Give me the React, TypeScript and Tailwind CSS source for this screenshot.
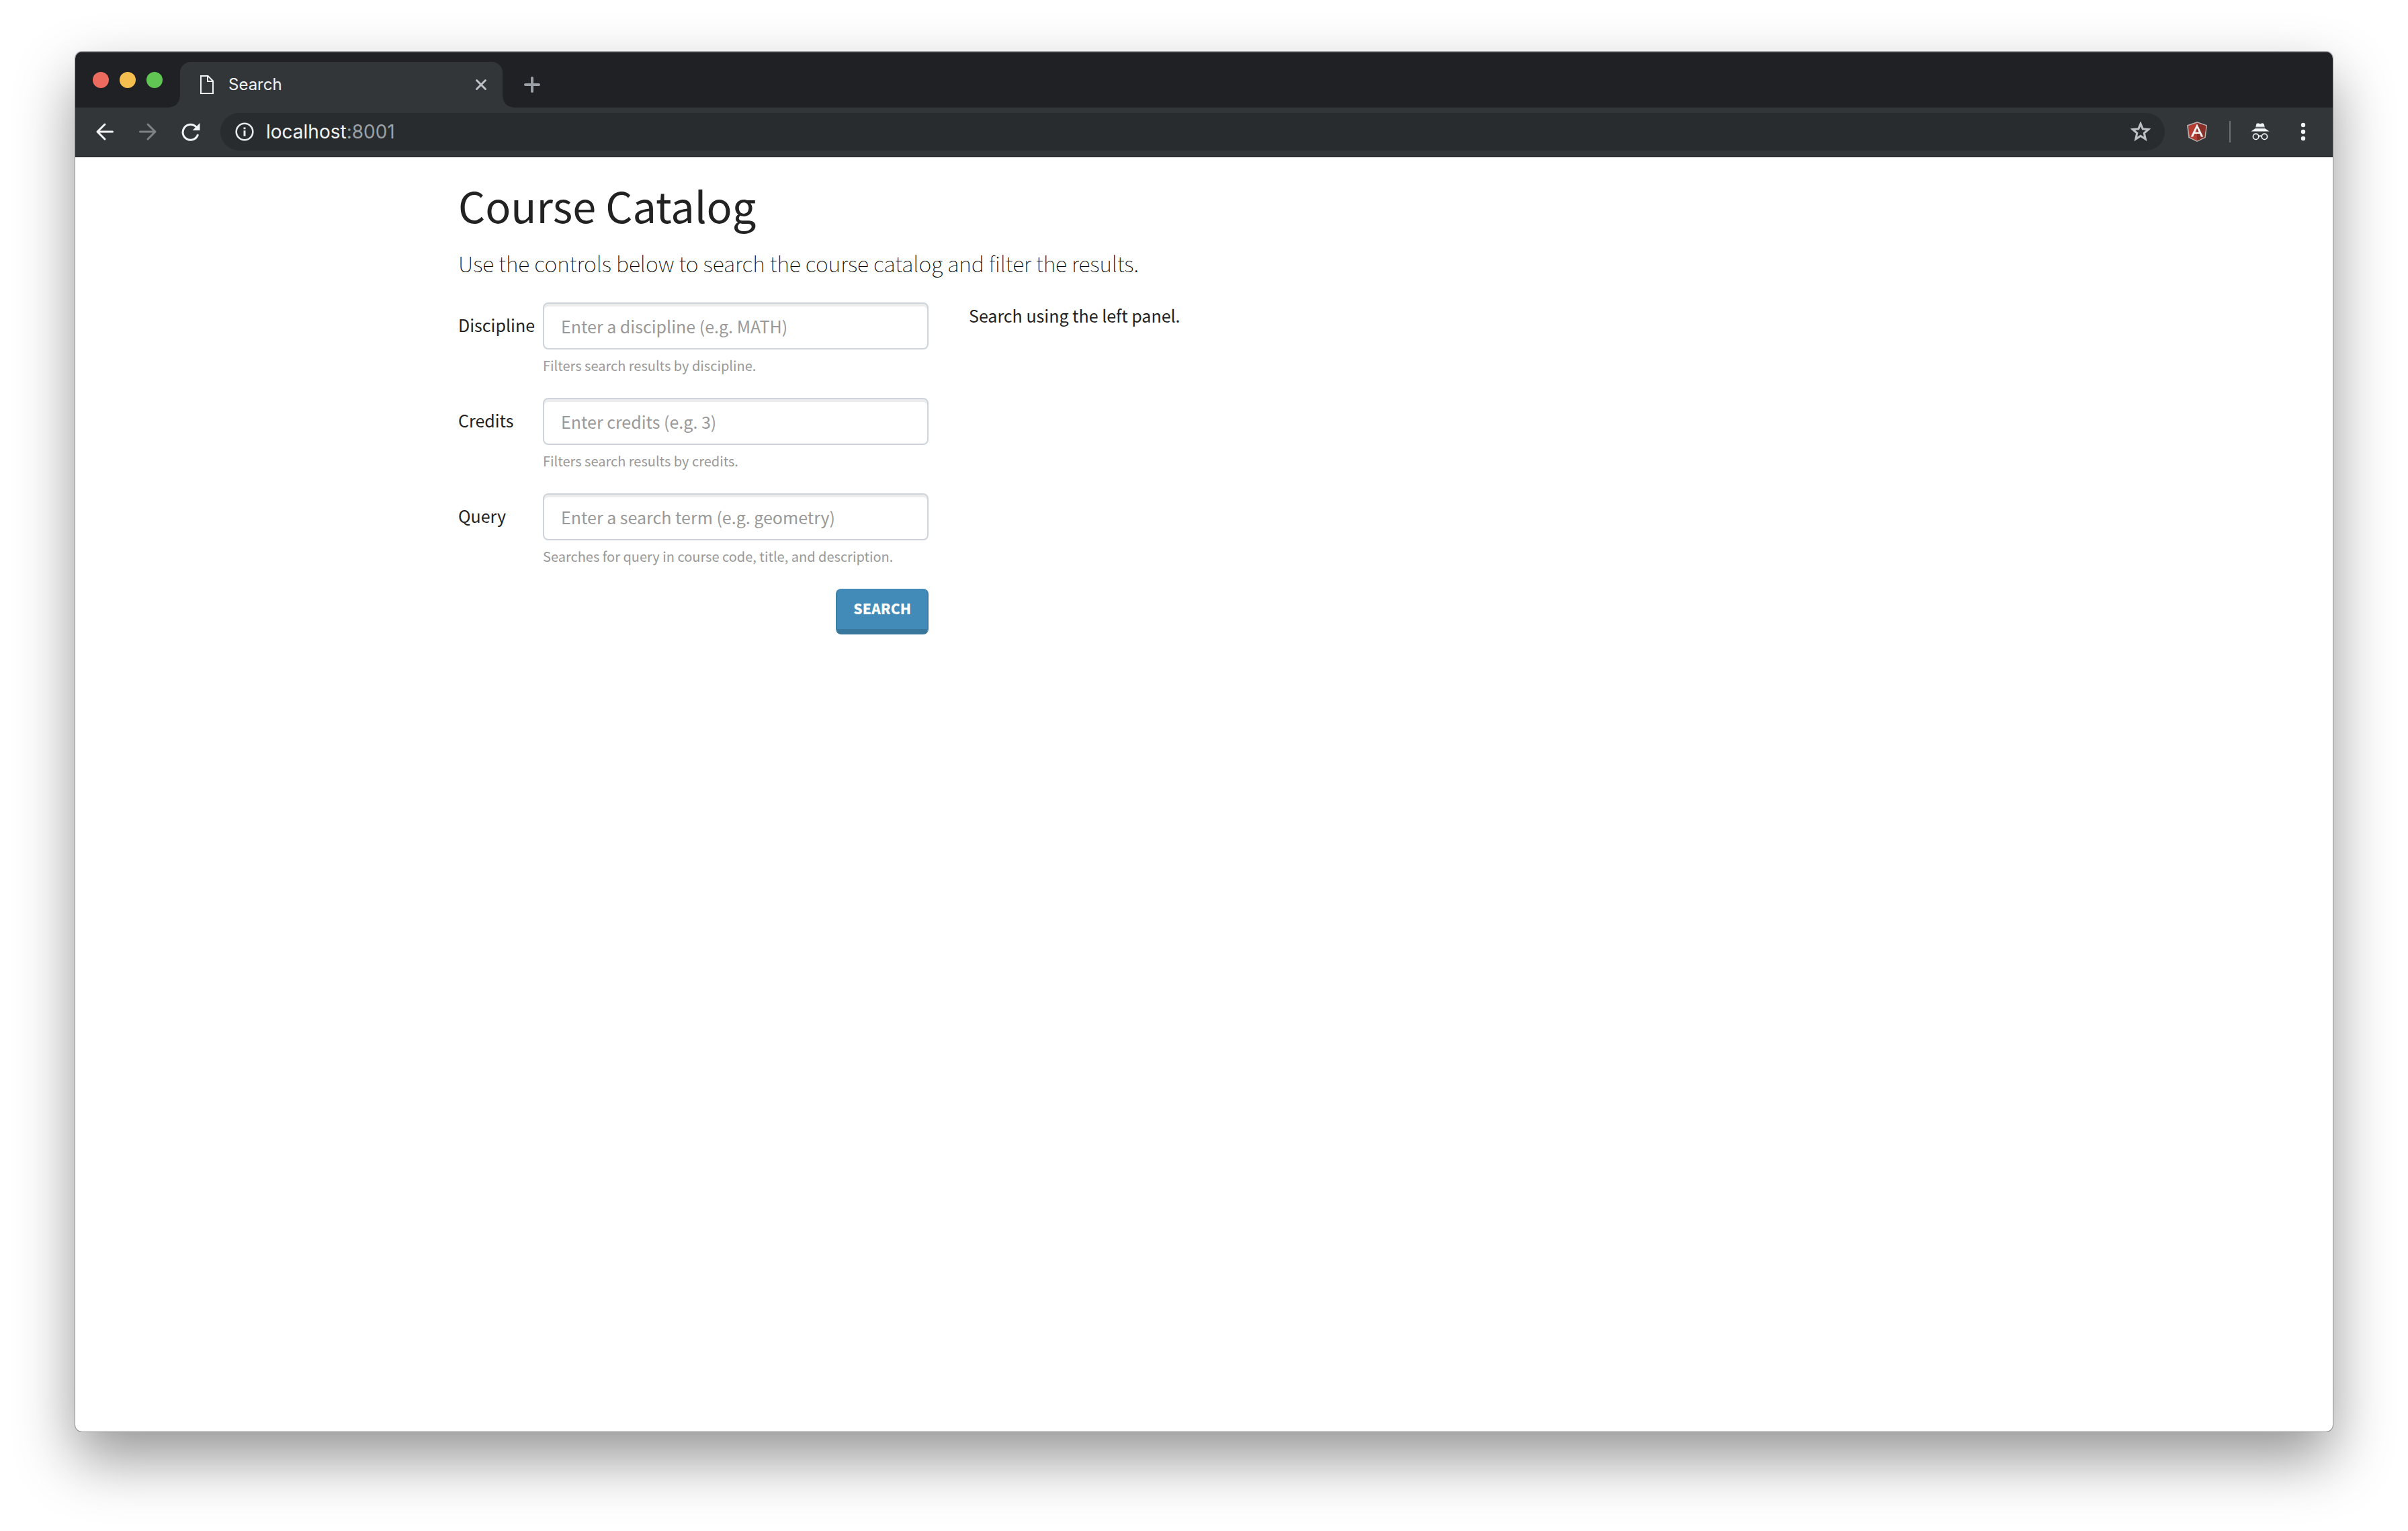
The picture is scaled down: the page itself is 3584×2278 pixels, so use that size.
import type { ReactNode } from "react";

const BODY_FONT = "font-['Noto_Sans_CJK_SC','Source_Sans_Pro',sans-serif]";
const CHROME_FONT = "font-[Inter,Roboto,sans-serif]";

function IconButton({ label, className = "", children }: { label: string; className?: string; children: ReactNode }) {
  return (
    <button type="button" aria-label={label} className={`flex h-10 w-10 shrink-0 items-center justify-center ${className}`}>
      {children}
    </button>
  );
}

function TabStrip() {
  return (
    <div className="flex h-[83px] items-end border-t border-[#5c5d5f] bg-[#202124]">
      <div className="flex h-[82px] w-[156px] shrink-0 items-center gap-4 pl-[26px]">
        <span className="h-6 w-6 rounded-full bg-[#ed6a5e]" />
        <span className="h-6 w-6 rounded-full bg-[#f5bf4f]" />
        <span className="h-6 w-6 rounded-full bg-[#61c554]" />
      </div>
      <div className="relative flex h-[68px] w-[480px] shrink-0 items-center rounded-t-2xl bg-[#323639] pl-[30px] pr-3">
        <span className="absolute bottom-0 -left-4 h-4 w-4 bg-[radial-gradient(circle_at_0_0,transparent_15px,#323639_16px)]" />
        <span className="absolute bottom-0 -right-4 h-4 w-4 bg-[radial-gradient(circle_at_100%_0,transparent_15px,#323639_16px)]" />
        <svg width="20" height="28" viewBox="0 0 20 28" fill="none" stroke="#f1f3f4" strokeWidth="2">
          <path d="M1 1H11.5L19 8.500V27H1Z" />
          <path d="M11 1V9H19" />
        </svg>
        <span className="ml-[22px] flex-1 text-2xl leading-8 text-[#f1f3f4]">Search</span>
        <IconButton label="Close tab">
          <svg width="18" height="18" viewBox="0 0 18 18" stroke="#bdc1c6" strokeWidth="3" strokeLinecap="round">
            <path d="M2.500 2.500L15.500 15.500M15.500 2.500L2.500 15.500" />
          </svg>
        </IconButton>
      </div>
      <div className="flex h-[68px] items-center pl-6">
        <IconButton label="New tab">
          <svg width="24" height="24" viewBox="0 0 24 24" stroke="#9aa0a6" strokeWidth="4" strokeLinecap="round">
            <path d="M12 2V22M2 12H22" />
          </svg>
        </IconButton>
      </div>
    </div>
  );
}

function Toolbar() {
  return (
    <div className="flex h-[74px] items-center border-b border-[#202124] bg-[#323639] px-6 pb-px">
      <IconButton label="Back">
        <svg width="28" height="28" viewBox="0 0 28 28" fill="none" stroke="#f1f3f4" strokeWidth="3" strokeLinecap="round" strokeLinejoin="round">
          <path d="M25.500 14H3M14 3L3 14L14 25" />
        </svg>
      </IconButton>
      <IconButton label="Forward" className="ml-6">
        <svg width="28" height="28" viewBox="0 0 28 28" fill="none" stroke="#7e8284" strokeWidth="3" strokeLinecap="round" strokeLinejoin="round">
          <path d="M2.500 14H25M14 3L25 14L14 25" />
        </svg>
      </IconButton>
      <IconButton label="Reload" className="ml-6">
        <svg width="28" height="28" viewBox="0 0 28 28" fill="none">
          <path d="M22.500 7.500A11.500 11.500 0 1 0 24.600 18" stroke="#f1f3f4" strokeWidth="3" />
          <path d="M27.500 1V12H16.500Z" fill="#f1f3f4" />
        </svg>
      </IconButton>
      <div className="ml-6 flex h-14 flex-1 items-center rounded-full bg-[#282c2f] pl-[22px] pr-4">
        <svg width="28" height="28" viewBox="0 0 28 28" fill="none" className="shrink-0">
          <circle cx="14" cy="14" r="12.300" stroke="#e8eaed" strokeWidth="2.600" />
          <path d="M14 12.300V20.500M14 7.500V10.300" stroke="#e8eaed" strokeWidth="3" />
        </svg>
        <div className="ml-[18px] flex-1 text-[28px] leading-9 text-[#9aa0a6]">
          <span className="text-[#f1f3f4]">localhost</span>:8001
        </div>
        <IconButton label="Bookmark this page">
          <svg width="30" height="30" viewBox="0 0 30 30" fill="none" stroke="#bdc1c6" strokeWidth="2.800">
            <path d="M15 4.200L17.900 11.200L25.600 11.900L19.800 16.900L21.600 24.900L15 20.700L8.400 24.900L10.200 16.900L4.400 11.900L12.100 11.200Z" transform="translate(-1.500 -1.500) scale(1.100)" />
          </svg>
        </IconButton>
      </div>
      <IconButton label="AngularJS extension" className="ml-7">
        <svg width="30" height="30" viewBox="0 0 30 30">
          <path d="M15 0L30 5.200L27.700 24L15 30L2.300 24L0 5.200Z" fill="#b3b3b3" />
          <path d="M15 1.700L28.300 6.200L26.200 22.900L15 28.400L3.800 22.900L1.700 6.200Z" fill="#b63d32" />
          <path d="M15 1.700L28.300 6.200L26.200 22.900L15 28.400Z" fill="#883028" />
          <path d="M15 3.300L5.700 22.400H9.200L11 18H19L20.800 22.400H24.300Z M15 9.500L17.700 15.600H12.300Z" fill="#f2f2f2" fillRule="evenodd" />
        </svg>
      </IconButton>
      <span className="ml-7 h-8 w-0.5 shrink-0 bg-[#6c7073]" />
      <IconButton label="Incognito" className="ml-6">
        <svg width="28" height="28" viewBox="0 0 28 28" fill="none">
          <path d="M8.500 2L11 1.200L14 2.200L17 1.200L19.500 2L20.700 6.800H7.300Z" fill="#f1f3f4" />
          <path d="M7 8.200H21" stroke="#8a8d90" strokeWidth="1.200" />
          <path d="M6.500 9.300H21.500L27.500 13.600H0.500Z" fill="#f1f3f4" />
          <circle cx="7.600" cy="21.300" r="4.200" stroke="#f1f3f4" strokeWidth="1.700" />
          <circle cx="20.400" cy="21.300" r="4.200" stroke="#f1f3f4" strokeWidth="1.700" />
          <path d="M11.600 20.800Q14 19.600 16.400 20.800" stroke="#f1f3f4" strokeWidth="1.700" />
        </svg>
      </IconButton>
      <IconButton label="Menu" className="ml-6">
        <svg width="8" height="28" viewBox="0 0 8 28" fill="#f1f3f4">
          <circle cx="4" cy="4" r="3.200" />
          <circle cx="4" cy="14" r="3.200" />
          <circle cx="4" cy="24" r="3.200" />
        </svg>
      </IconButton>
    </div>
  );
}

const fields = [
  { id: "discipline", label: "Discipline", placeholder: "Enter a discipline (e.g. MATH)", help: "Filters search results by discipline." },
  { id: "credits", label: "Credits", placeholder: "Enter credits (e.g. 3)", help: "Filters search results by credits." },
  { id: "query", label: "Query", placeholder: "Enter a search term (e.g. geometry)", help: "Searches for query in course code, title, and description." },
];

function SearchForm() {
  return (
    <form onSubmit={(e) => e.preventDefault()}>
      {fields.map((f) => (
        <div key={f.id} className="mb-[31px] flex">
          <label htmlFor={f.id} className="w-[126px] shrink-0 whitespace-nowrap pt-3 text-[25px] leading-[42px]">
            {f.label}
          </label>
          <div className="min-w-0 flex-1">
            <input
              id={f.id}
              type="text"
              placeholder={f.placeholder}
              aria-describedby={`${f.id}-help`}
              className="block h-[70px] w-full rounded-lg border-2 border-[#ced4da] bg-white px-[25px] text-[25px] shadow-[inset_0_4px_0_rgba(0,0,0,0.075)] outline-none placeholder:text-[#999999]"
            />
            <small id={`${f.id}-help`} className="mt-[7px] block whitespace-nowrap text-[20px] leading-[34px] text-[#999999]">
              {f.help}
            </small>
          </div>
        </div>
      ))}
      <div className="flex justify-end">
        <button
          type="submit"
          className="h-[68px] rounded-lg border-x-2 border-b-8 border-[#3c7ca5] border-b-[#3a779c] bg-[#428bb8] px-6 text-[21px] font-black uppercase text-white"
        >
          Search
        </button>
      </div>
    </form>
  );
}

export default function App() {
  return (
    <div className="flex min-h-screen flex-col bg-white px-28 pb-[148px] pt-[77px]">
      <div className="flex flex-1 flex-col overflow-hidden rounded-[10px] bg-white shadow-[0_0_0_1px_rgba(0,0,0,0.3),0_40px_88px_rgba(0,0,0,0.42)]">
        <header className={CHROME_FONT}>
          <TabStrip />
          <Toolbar />
        </header>
        <main className={`mx-auto w-full max-w-[2280px] px-[30px] pt-[29px] text-[#222222] ${BODY_FONT}`}>
          <h1 className="text-[63px] leading-[84px]">Course Catalog</h1>
          <p className="mt-[23px] text-[32px] font-thin leading-[42px] text-black">
            Use the controls below to search the course catalog and filter the results.
          </p>
          <div className="mt-[38px] grid grid-cols-3 gap-[60px]">
            <SearchForm />
            <p className="col-span-2 text-[25px] leading-[38px]">Search using the left panel.</p>
          </div>
        </main>
      </div>
    </div>
  );
}
